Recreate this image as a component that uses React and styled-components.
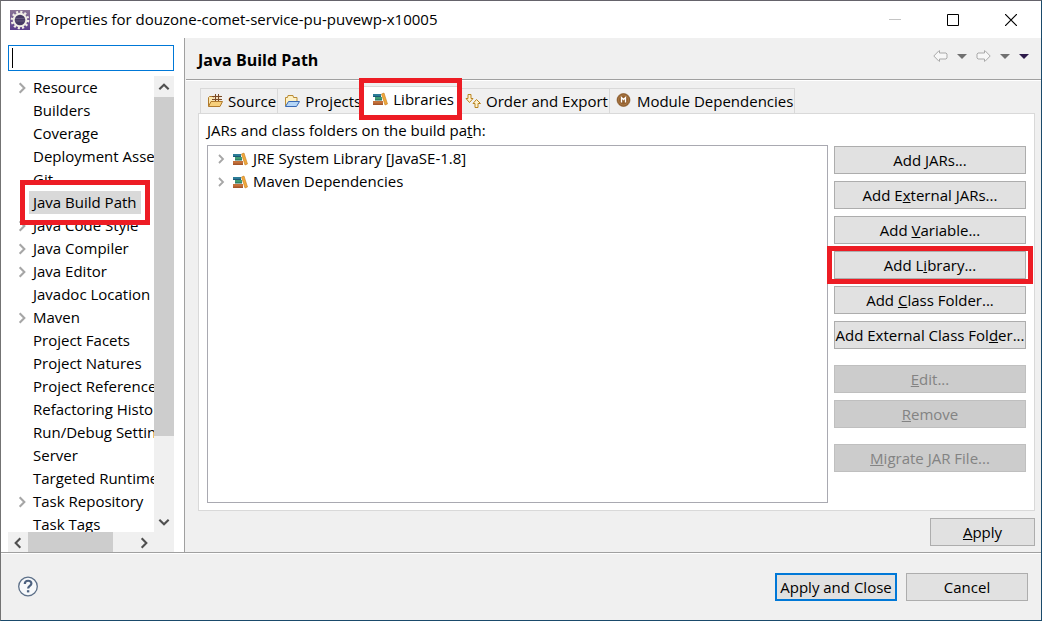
import React, { useState } from "react";
import styled, { createGlobalStyle } from "styled-components";

const GlobalStyle = createGlobalStyle`
  * {
    box-sizing: border-box;
  }
  body {
    margin: 0;
    font-family: "Open Sans", "Noto Sans", "Noto Sans CJK KR", sans-serif;
    font-size: 15px;
    line-height: 23px;
    color: #000;
  }
  button, input {
    font: inherit;
    color: inherit;
  }
`;

const Window = styled.div`
  display: flex;
  flex-direction: column;
  height: 100vh;
  background: #f0f0f0;
  border: 1px solid #1a4a6b;
  border-top-color: #65636b;
  border-left-color: #737373;
`;

const TitleBar = styled.header`
  display: flex;
  align-items: center;
  height: 37px;
  padding: 0 1px 0 9px;
  gap: 5px;
  background: #fff;
`;

const WindowTitle = styled.span`
  flex: 1;
  white-space: nowrap;
`;

const WindowControls = styled.div`
  display: flex;
`;

const WindowButton = styled.button`
  display: flex;
  align-items: center;
  justify-content: center;
  width: 58px;
  height: 37px;
  padding: 0;
  border: 0;
  background: none;
`;

const Body = styled.div`
  display: flex;
  flex: 1;
  min-height: 0;
`;

const Sidebar = styled.aside`
  display: flex;
  flex-direction: column;
  width: 184px;
  padding: 7px 10px 0 7px;
  gap: 5px;
  background: #fff;
  border-right: 1px solid #a0a0a0;
`;

const Filter = styled.input`
  width: 100%;
  height: 26px;
  padding: 0 3px;
  border: 1px solid #0078d7;
  outline: none;
  background: #fff;
  &:placeholder-shown {
    caret-color: transparent;
    background: linear-gradient(#000, #000) 3px center / 1px 20px no-repeat #fff;
  }
`;

const TreeFrame = styled.div`
  display: grid;
  flex: 1;
  min-height: 0;
  grid-template-columns: minmax(0, 1fr) 20px;
  grid-template-rows: minmax(0, 1fr) 20px;
  background: #f0f0f0;
`;

const Tree = styled.ul`
  margin: 0;
  padding: 0;
  list-style: none;
  overflow: hidden;
  background: #fff;
`;

const TreeItem = styled.li`
  display: flex;
  align-items: center;
  height: 23px;
  padding-left: ${(p) => (p.$list ? "6px" : "7px")};
  white-space: nowrap;
`;

const Twisty = styled.span`
  display: flex;
  justify-content: center;
  flex: none;
  width: 14px;
`;

const ItemLabel = styled.span`
  position: relative;
  height: 23px;
  padding: 0 4px;
  background: ${(p) => (p.$selected ? "#d9d9d9" : "transparent")};
`;

const Highlight = styled.span`
  position: absolute;
  inset: ${(p) => p.$inset};
  z-index: 2;
  border: 5px solid #ed1c24;
  pointer-events: none;
`;

const ScrollBar = styled.div`
  display: flex;
  flex-direction: ${(p) => (p.$vertical ? "column" : "row")};
  grid-column: ${(p) => (p.$vertical ? "2" : "1 / 3")};
  padding-right: ${(p) => (p.$vertical ? "0" : "20px")};
  background: #f0f0f0;
`;

const ScrollButton = styled.button`
  display: flex;
  align-items: center;
  justify-content: center;
  flex: none;
  width: 20px;
  height: 21px;
  padding: 0;
  border: 0;
  background: none;
`;

const Track = styled.div`
  display: flex;
  flex: 1;
  flex-direction: ${(p) => (p.$vertical ? "column" : "row")};
`;

const Thumb = styled.div`
  flex: 0 0 ${(p) => p.$size};
  background: #cdcdcd;
`;

const Page = styled.main`
  display: flex;
  flex: 1;
  flex-direction: column;
  min-width: 0;
  margin-left: 1px;
`;

const PageHeader = styled.div`
  display: flex;
  align-items: center;
  justify-content: space-between;
  height: 42px;
  padding: 0 12px;
  border-bottom: 1px solid #a0a0a0;
  box-shadow: 0 1px #fff;
`;

const PageTitle = styled.h1`
  margin: 0;
  padding-top: 3px;
  font-size: 16px;
  font-weight: 700;
`;

const Nav = styled.nav`
  display: flex;
  align-items: center;
  gap: 9px;
  padding-bottom: 5px;
`;

const NavButton = styled.button`
  display: flex;
  padding: 0;
  border: 0;
  background: none;
`;

const Content = styled.div`
  display: flex;
  flex: 1;
  flex-direction: column;
  min-height: 0;
  padding: 6px 6px 6px 12px;
`;

const TabList = styled.div`
  display: flex;
  align-items: flex-end;
  height: 27px;
  padding-left: 2px;
`;

const Tab = styled.button`
  position: relative;
  display: flex;
  align-items: center;
  gap: 5px;
  height: ${(p) => (p.$active ? "28px" : "25px")};
  padding: ${(p) => (p.$active ? "0 4px 3px 9px" : "0 1px 0 6px")};
  margin-bottom: ${(p) => (p.$active ? "-1px" : "0")};
  border: 1px solid #d9d9d9;
  border-bottom: 0;
  border-left-width: ${(p) => (p.$first ? "1px" : "0")};
  background: ${(p) => (p.$active ? "#fff" : "#f0f0f0")};
  z-index: ${(p) => (p.$active ? "1" : "auto")};
  white-space: nowrap;
`;

const Pane = styled.section`
  display: flex;
  flex: 1;
  flex-direction: column;
  min-height: 0;
  padding: 5px 8px 7px;
  gap: 3px;
  border: 1px solid #d9d9d9;
  background: #fff;
`;

const Columns = styled.div`
  display: flex;
  flex: 1;
  min-height: 0;
  gap: 6px;
`;

const EntryList = styled.ul`
  flex: 1;
  margin: 0;
  padding: 1px 0;
  list-style: none;
  border: 1px solid #a9a9b1;
  background: #fff;
`;

const Entry = styled.span`
  display: flex;
  align-items: center;
  gap: 5px;
  padding-left: 4px;
`;

const Actions = styled.div`
  display: flex;
  flex-direction: column;
  gap: 16px;
  width: 192px;
  padding-top: 1px;
`;

const ActionGroup = styled.div`
  display: flex;
  flex-direction: column;
  gap: 7px;
`;

const Button = styled.button`
  position: relative;
  min-width: ${(p) => p.$width || "0"};
  height: 28px;
  padding: 0;
  border: ${(p) => (p.$primary ? "2px solid #0078d7" : "1px solid #adadad")};
  line-height: ${(p) => (p.$primary ? "24px" : "26px")};
  background: #e1e1e1;
  white-space: nowrap;
  &:disabled {
    color: #838383;
    border-color: #bfbfbf;
    background: #cccccc;
  }
`;

const ApplyRow = styled.div`
  display: flex;
  justify-content: flex-end;
  padding-top: 7px;
`;

const Footer = styled.footer`
  display: flex;
  align-items: center;
  height: 68px;
  padding: 0 13px 0 16px;
  gap: 9px;
  border-top: 1px solid #a0a0a0;
  box-shadow: inset 0 1px #fff;
`;

const HelpButton = styled(NavButton)`
  margin-right: auto;
`;

function Chevron({ dir = "right", color = "#a6a6a6", size = 14 }) {
  const d = {
    right: "M4 2l4 4-4 4",
    left: "M8 2L4 6l4 4",
    up: "M2 8l4-4 4 4",
    down: "M2 4l4 4 4-4",
  };
  return (
    <svg width={size} height={size} viewBox="0 0 12 12" fill="none" stroke={color} strokeWidth="1.8">
      <path d={d[dir]} />
    </svg>
  );
}

function EclipseIcon() {
  return (
    <svg width="20" height="20" viewBox="0 0 20 20">
      <defs>
        <linearGradient id="gearBack" x1="0" y1="0" x2="0" y2="1">
          <stop offset="0" stopColor="#8a7596" />
          <stop offset="1" stopColor="#5b3e8c" />
        </linearGradient>
      </defs>
      <rect width="20" height="20" fill="url(#gearBack)" />
      <circle cx="10" cy="10" r="8" fill="none" stroke="#f0ede6" strokeWidth="2.6" strokeDasharray="2.1 2.09" />
      <circle cx="10" cy="10" r="6.3" fill="#463a63" stroke="#f0ede6" strokeWidth="2" />
      <path d="M5 8.5h10M5 11h10" stroke="#64597d" />
    </svg>
  );
}

function SourceIcon() {
  return (
    <svg width="16" height="16" viewBox="0 0 16 16">
      <path d="M1.5 13V4.5l1-1h3l1 1h6V13z" fill="#fbe7ae" stroke="#b07a2c" />
      <path d="M6.5 2.5h7v5.500h-7z" fill="#f3dfc0" />
      <path d="M5 3.5h10M5 6.5h10M8.5 1v8M11.5 1v8" stroke="#7a4a26" fill="none" />
      <path d="M1.5 13.5L4 8.5h11.5L13 13.5z" fill="#f6cf7b" stroke="#b07a2c" />
    </svg>
  );
}

function ProjectsIcon() {
  return (
    <svg width="16" height="16" viewBox="0 0 16 16">
      <path d="M1.5 13V4.5h2l.5-2h5l.5 2h3.500V8" fill="#fdf0c4" stroke="#b98b34" />
      <path d="M1.5 13.5L4.5 8.5h11L12.5 13.5z" fill="#b5d6f7" stroke="#3868b4" />
    </svg>
  );
}

function LibraryIcon() {
  return (
    <svg width="16" height="16" viewBox="0 0 16 16">
      <path d="M1 3h8v3H1z" fill="#2c7d98" />
      <path d="M1 5h8v1H1z" fill="#1d5876" />
      <path d="M3 6h7v3H3z" fill="#3f9c74" />
      <path d="M3 8.5h7v1H3z" fill="#21695b" />
      <path d="M1 10h10v4H1z" fill="#c4703a" />
      <path d="M1 12.5h10V14H1z" fill="#a5562a" />
      <path d="M9.5 3L12 2l3.500 11-2.500 1z" fill="#f0a93c" stroke="#c67b1c" strokeWidth=".6" />
    </svg>
  );
}

function OrderIcon() {
  return (
    <svg width="16" height="16" viewBox="0 0 16 16" fill="#fff3cf" stroke="#b98420" strokeLinejoin="round">
      <path d="M3 1.5h3v4h2L4.5 9.5 1 5.5h2z" />
      <path d="M10 14.5h3v-4h2.500l-4-4-3.500 4h2z" />
    </svg>
  );
}

function ModuleIcon() {
  return (
    <svg width="16" height="16" viewBox="0 0 16 16">
      <circle cx="7.5" cy="7" r="6.5" fill="#94612f" stroke="#7d4d1f" strokeWidth=".6" />
      <circle cx="7.5" cy="7" r="5" fill="none" stroke="#b88a58" strokeWidth=".6" />
      <path d="M5.5 9.5V4.500l2 2 2-2v5" fill="none" stroke="#fff" strokeWidth="1.3" />
    </svg>
  );
}

function ArrowIcon({ flip }) {
  return (
    <svg width="15" height="12" viewBox="0 0 15 12" fill="#f7f7f7" stroke="#a9a9a9">
      <path
        d="M.8 6L6 .7h.5v2.300h6.500l1 1v4l-1 1H6.500v2.300H6z"
        strokeLinejoin="round"
        transform={flip ? "matrix(-1 0 0 1 15 0)" : undefined}
      />
    </svg>
  );
}

function Triangle({ color = "#707070" }) {
  return (
    <svg width="10" height="5" viewBox="0 0 10 5">
      <path d="M0 0h10L5 5z" fill={color} />
    </svg>
  );
}

function HelpIcon() {
  return (
    <svg width="22" height="22" viewBox="0 0 22 22" fill="none">
      <circle cx="11" cy="10.5" r="9.3" fill="#f7f9fb" stroke="#5d7089" strokeWidth="1.3" />
      <path d="M7.8 8c0-4.300 6.600-4.200 6.600-.5 0 2.400-3.300 2.500-3.300 5" stroke="#4d6280" strokeWidth="2.200" />
      <path d="M9.900 14.200h2.400v2.200H9.900z" fill="#4d6280" />
    </svg>
  );
}

const treeItems = [
  { name: "Resource", open: true },
  { name: "Builders" },
  { name: "Coverage" },
  { name: "Deployment Assembly" },
  { name: "Git" },
  { name: "Java Build Path" },
  { name: "Java Code Style", open: true },
  { name: "Java Compiler", open: true },
  { name: "Java Editor", open: true },
  { name: "Javadoc Location" },
  { name: "Maven", open: true },
  { name: "Project Facets" },
  { name: "Project Natures" },
  { name: "Project References" },
  { name: "Refactoring History" },
  { name: "Run/Debug Settings" },
  { name: "Server" },
  { name: "Targeted Runtimes" },
  { name: "Task Repository", open: true },
  { name: "Task Tags" },
];

const tabs = [
  { name: "Source", Icon: SourceIcon },
  { name: "Projects", Icon: ProjectsIcon },
  { name: "Libraries", Icon: LibraryIcon },
  { name: "Order and Export", Icon: OrderIcon },
  { name: "Module Dependencies", Icon: ModuleIcon },
];

// "&" marks the mnemonic letter
const actionGroups = [
  [
    { text: "Add &JARs..." },
    { text: "Add E&xternal JARs..." },
    { text: "Add &Variable..." },
    { text: "Add L&ibrary...", marked: true },
    { text: "Add &Class Folder..." },
    { text: "Add External Class Fol&der..." },
  ],
  [
    { text: "&Edit...", disabled: true },
    { text: "&Remove", disabled: true },
  ],
  [{ text: "&Migrate JAR File...", disabled: true }],
];

const entries = ["JRE System Library [JavaSE-1.8]", "Maven Dependencies"];

function Mnemonic({ text }) {
  const [before, rest] = text.split("&");
  return (
    <>
      {before}
      <u>{rest[0]}</u>
      {rest.slice(1)}
    </>
  );
}

export default function App() {
  const [filter, setFilter] = useState("");
  const [page, setPage] = useState("Java Build Path");
  const [tab, setTab] = useState("Libraries");

  return (
    <Window>
      <GlobalStyle />
      <TitleBar>
        <EclipseIcon />
        <WindowTitle>Properties for douzone-comet-service-pu-puvewp-x10005</WindowTitle>
        <WindowControls>
          <WindowButton aria-label="Minimize">
            <svg width="12" height="12" stroke="#c4c4c4"><path d="M0 5.5h12" /></svg>
          </WindowButton>
          <WindowButton aria-label="Maximize">
            <svg width="12" height="12" fill="none" stroke="#000"><path d="M.5.5h11v11H.5z" /></svg>
          </WindowButton>
          <WindowButton aria-label="Close">
            <svg width="12" height="12" stroke="#000" strokeWidth="1.2"><path d="M0 0l12 12M12 0L0 12" /></svg>
          </WindowButton>
        </WindowControls>
      </TitleBar>

      <Body>
        <Sidebar>
          <Filter
            type="text"
            aria-label="Filter"
            placeholder=" "
            autoFocus
            value={filter}
            onChange={(e) => setFilter(e.target.value)}
          />
          <TreeFrame>
            <Tree>
              {treeItems.map(({ name, open }) => (
                <TreeItem key={name} onClick={() => setPage(name)}>
                  <Twisty>{open && <Chevron />}</Twisty>
                  <ItemLabel $selected={name === page}>
                    {name}
                    {name === "Java Build Path" && <Highlight $inset="-11px -9px" />}
                  </ItemLabel>
                </TreeItem>
              ))}
            </Tree>
            <ScrollBar $vertical>
              <ScrollButton aria-label="Scroll up"><Chevron dir="up" color="#505050" /></ScrollButton>
              <Track $vertical><Thumb $size="82%" /></Track>
              <ScrollButton aria-label="Scroll down"><Chevron dir="down" color="#505050" /></ScrollButton>
            </ScrollBar>
            <ScrollBar>
              <ScrollButton aria-label="Scroll left"><Chevron dir="left" color="#505050" /></ScrollButton>
              <Track><Thumb $size="80%" /></Track>
              <ScrollButton aria-label="Scroll right"><Chevron dir="right" color="#505050" /></ScrollButton>
            </ScrollBar>
          </TreeFrame>
        </Sidebar>

        <Page>
          <PageHeader>
            <PageTitle>Java Build Path</PageTitle>
            <Nav>
              <NavButton aria-label="Back"><ArrowIcon /></NavButton>
              <NavButton aria-label="Back history"><Triangle /></NavButton>
              <NavButton aria-label="Forward"><ArrowIcon flip /></NavButton>
              <NavButton aria-label="Forward history"><Triangle /></NavButton>
              <NavButton aria-label="Menu"><Triangle color="#2d1a4a" /></NavButton>
            </Nav>
          </PageHeader>

          <Content>
            <TabList role="tablist">
              {tabs.map(({ name, Icon }, i) => (
                <Tab
                  key={name}
                  role="tab"
                  aria-selected={name === tab}
                  $active={name === tab}
                  $first={i === 0}
                  onClick={() => setTab(name)}
                >
                  <Icon />
                  {name}
                  {name === "Libraries" && <Highlight $inset="-9px -4px -6px" />}
                </Tab>
              ))}
            </TabList>
            <Pane>
              <div id="entries-label">
                <Mnemonic text="JARs and class folders on the build pa&th:" />
              </div>
              <Columns>
                <EntryList aria-labelledby="entries-label">
                  {entries.map((name) => (
                    <TreeItem key={name} $list>
                      <Twisty><Chevron size={12} /></Twisty>
                      <Entry>
                        <LibraryIcon />
                        {name}
                      </Entry>
                    </TreeItem>
                  ))}
                </EntryList>
                <Actions>
                  {actionGroups.map((group, i) => (
                    <ActionGroup key={i}>
                      {group.map(({ text, disabled, marked }) => (
                        <Button key={text} disabled={disabled}>
                          <Mnemonic text={text} />
                          {marked && <Highlight $inset="-6px -8px" />}
                        </Button>
                      ))}
                    </ActionGroup>
                  ))}
                </Actions>
              </Columns>
            </Pane>
            <ApplyRow>
              <Button $width="105px"><Mnemonic text="&Apply" /></Button>
            </ApplyRow>
          </Content>
        </Page>
      </Body>

      <Footer>
        <HelpButton aria-label="Help"><HelpIcon /></HelpButton>
        <Button $primary $width="122px">Apply and Close</Button>
        <Button $width="122px">Cancel</Button>
      </Footer>
    </Window>
  );
}
